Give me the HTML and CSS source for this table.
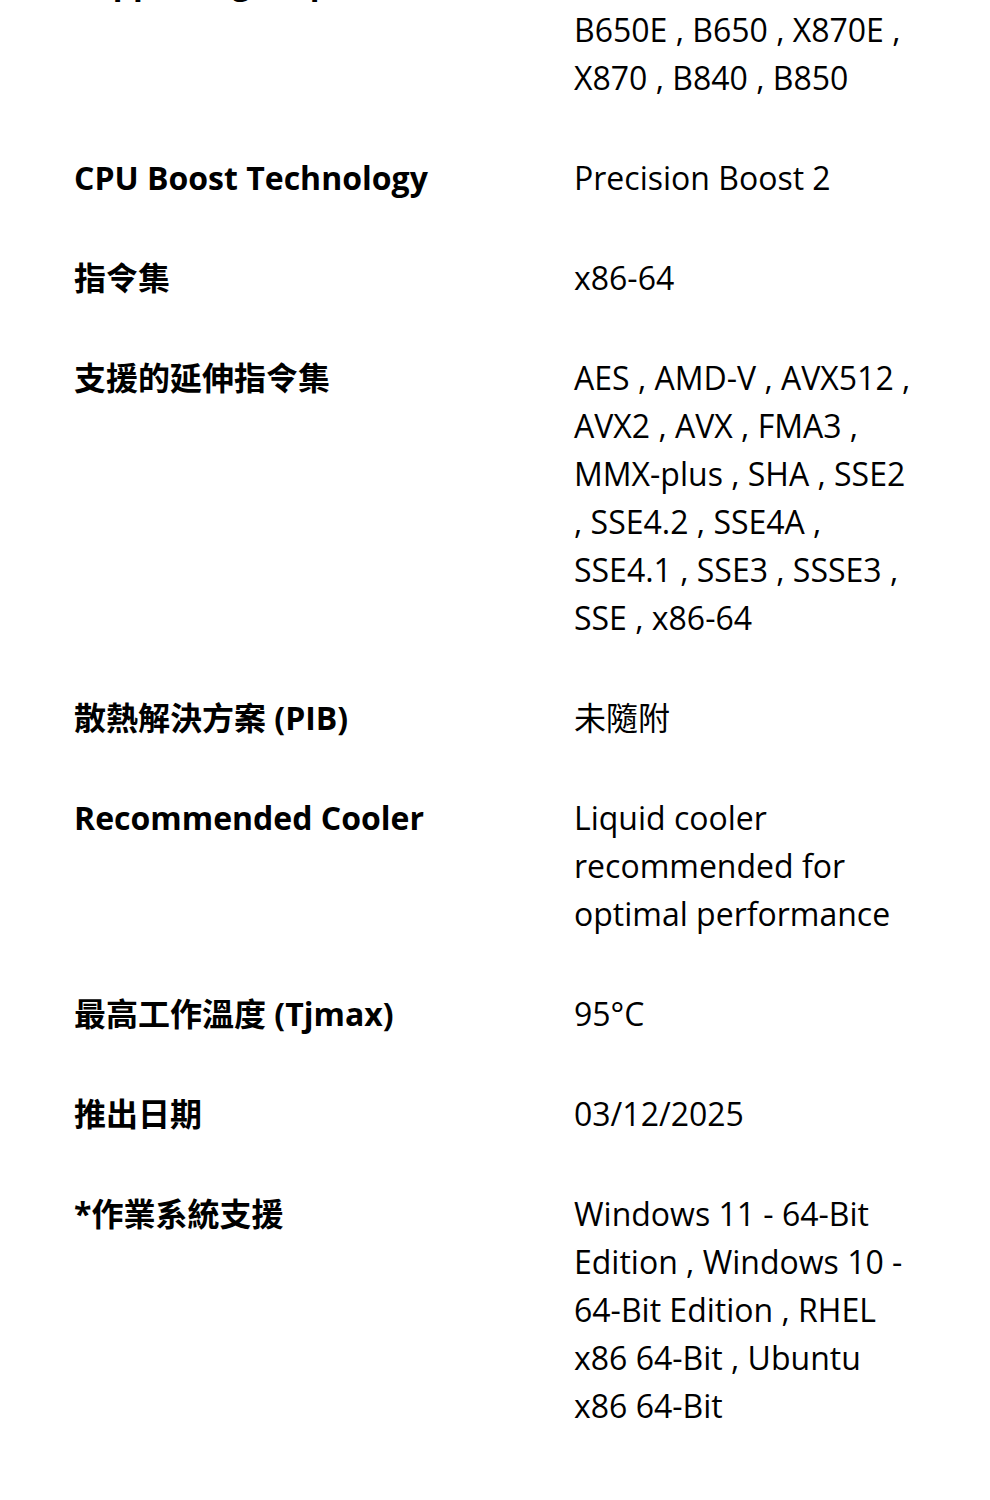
FILE: index.html
```html
<!DOCTYPE html>
<html lang="zh-Hant">
<head>
<meta charset="utf-8">
<title>Specifications</title>
<link rel="stylesheet" href="styles.css">
</head>
<body>
<dl class="specs">
  <div class="spec-row">
    <dt class="spec-label">Supporting Chipsets</dt>
    <dd class="spec-value">A620 , X670E , X670 , B650E , B650 , X870E , X870 , B840 , B850</dd>
  </div>
  <div class="spec-row">
    <dt class="spec-label">CPU Boost Technology</dt>
    <dd class="spec-value">Precision Boost 2</dd>
  </div>
  <div class="spec-row">
    <dt class="spec-label">指令集</dt>
    <dd class="spec-value">x86-64</dd>
  </div>
  <div class="spec-row">
    <dt class="spec-label">支援的延伸指令集</dt>
    <dd class="spec-value">AES , AMD-V , AVX512 , AVX2 , AVX , FMA3 , MMX-plus , SHA , SSE2 , SSE4.2 , SSE4A , SSE4.1 , SSE3 , SSSE3 , SSE , x86-64</dd>
  </div>
  <div class="spec-row">
    <dt class="spec-label">散熱解決方案 (PIB)</dt>
    <dd class="spec-value">未隨附</dd>
  </div>
  <div class="spec-row">
    <dt class="spec-label">Recommended Cooler</dt>
    <dd class="spec-value">Liquid cooler recommended for optimal performance</dd>
  </div>
  <div class="spec-row">
    <dt class="spec-label">最高工作溫度 (Tjmax)</dt>
    <dd class="spec-value">95°C</dd>
  </div>
  <div class="spec-row">
    <dt class="spec-label">推出日期</dt>
    <dd class="spec-value">03/12/2025</dd>
  </div>
  <div class="spec-row">
    <dt class="spec-label">*作業系統支援</dt>
    <dd class="spec-value">Windows 11 - 64-Bit Edition , Windows 10 - 64-Bit Edition , RHEL x86 64-Bit , Ubuntu x86 64-Bit</dd>
  </div>
</dl>
</body>
</html>
```
FILE: styles.css
```css
html, body {
  margin: 0;
  padding: 0;
  background: #ffffff;
}

body {
  font-family: "Open Sans", "Noto Sans CJK TC", sans-serif;
  font-size: 32px;
  line-height: 48px;
  color: #000000;
}

.specs {
  margin: -68px 0 0 0;
  padding: 0 76px 0 74px;
}

.spec-row {
  display: grid;
  grid-template-columns: 500px 340px;
  padding: 26px 0;
}

.spec-label {
  margin: 0;
  font-weight: 700;
  color: #000000;
}

.spec-value {
  margin: 0;
  font-weight: 400;
  color: #000000;
}
```
